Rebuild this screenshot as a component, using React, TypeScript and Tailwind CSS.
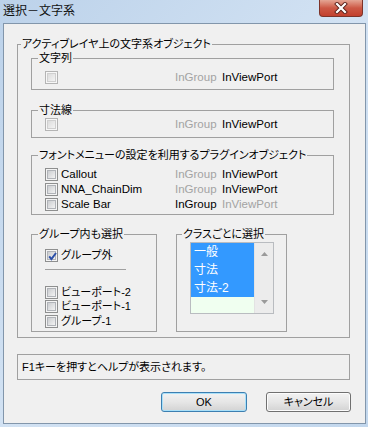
import React from 'react';

const Check: React.FC<{ checked?: boolean; dim?: boolean }> = ({ checked = false, dim = false }) => (
  <span
    className={`relative flex h-[13px] w-[13px] shrink-0 border p-[1px] ${
      dim ? 'border-[#b4b4b4] bg-[#f7f7f7]' : 'border-[#8e8f8f] bg-[#f4f4f4]'
    }`}
  >
    <span
      className={`h-full w-full border ${
        dim
          ? 'border-[#cfcfcf] bg-gradient-to-br from-[#dcdcdc] to-[#f4f4f4]'
          : 'border-[#b0b3b8] bg-gradient-to-br from-[#cbcdd0] to-[#f3f3f3]'
      }`}
    />
    {checked && (
      <svg className="absolute left-0 top-0" width="13" height="13" viewBox="0 0 13 13">
        <path d="M3.2 6.4 L5.4 9.2 L10 3" fill="none" stroke="#2b4fa8" strokeWidth="2" />
      </svg>
    )}
  </span>
);

const Group: React.FC<{ title: string; className?: string; children: React.ReactNode }> = ({
  title,
  className = '',
  children,
}) => (
  <fieldset className={`border border-[#a0a0a0] ${className}`}>
    <legend className="px-[1px] leading-[14px]">{title}</legend>
    {children}
  </fieldset>
);

const Row: React.FC<{ label?: string; group: boolean; view: boolean }> = ({ label, group, view }) => (
  <div className="flex h-[13px] items-center text-[11.5px] leading-[13px]">
    <div className="flex w-[130px] items-center gap-[3px]">
      <Check dim={!label} />
      {label && <span>{label}</span>}
    </div>
    <span className={`w-[47px] ${group ? 'text-black' : 'text-[#a3a3a3]'}`}>InGroup</span>
    <span className={view ? 'text-black' : 'text-[#a3a3a3]'}>InViewPort</span>
  </div>
);

const Item: React.FC<{ label: string; checked?: boolean; className?: string }> = ({ label, checked, className = '' }) => (
  <div className={`ml-[7px] flex h-[13px] items-center gap-[3px] leading-[13px] ${className}`}>
    <Check checked={checked} />
    <span>{label}</span>
  </div>
);

export default function App() {
  return (
    <div className="h-[427px] w-[368px] overflow-hidden bg-gradient-to-br from-[#bcd2ea] via-[#d2e2f3] to-[#c2d7ed] font-['Liberation_Sans','Noto_Sans_CJK_JP',sans-serif] text-[11px] text-black [font-feature-settings:'palt']">
      <div className="flex h-[23px] items-start justify-between">
        <span className="pl-[3px] pt-[4px] leading-[14px] text-[12px] text-[#111]">選択－文字系</span>
        <div className="mr-[5px] flex h-[17px] w-[44px] items-center justify-center rounded-b-[4px] border border-t-0 border-[#7d3329] bg-gradient-to-b from-[#e4a594] via-[#cc5845] to-[#c2402e]">
          <svg width="14" height="12" viewBox="0 0 14 12">
            <path d="M3 2 L11 10 M11 2 L3 10" stroke="#5a2019" strokeWidth="4" strokeLinecap="square" />
            <path d="M3 2 L11 10 M11 2 L3 10" stroke="#ffffff" strokeWidth="2.2" strokeLinecap="square" />
          </svg>
        </div>
      </div>

      <div className="ml-[3px] h-[401px] w-[363px] border border-[#8296ab] bg-[#f0f0f0]">
        <Group title="アクティブレイヤ上の文字系オブジェクト" className="ml-[13px] mt-[13px] w-[333px] pb-[5px] pl-[3px]">
          <Group title="文字列" className="ml-[10px] w-[303px] pb-[5px] pl-[6px] pt-[6px]">
            <div className="ml-[7px]">
              <Row group={false} view />
            </div>
          </Group>

          <Group title="寸法線" className="ml-[10px] mt-[13px] w-[303px] pb-[6px] pl-[6px] pt-[1px]">
            <div className="ml-[7px]">
              <Row group={false} view />
            </div>
          </Group>

          <Group
            title="フォントメニューの設定を利用するプラグインオブジェクト"
            className="ml-[10px] mt-[10px] w-[303px] pb-[3px] pl-[6px] pt-[6px]"
          >
            <div className="ml-[7px] flex flex-col gap-[2px]">
              <Row label="Callout" group={false} view />
              <Row label="NNA_ChainDim" group={false} view />
              <Row label="Scale Bar" group view={false} />
            </div>
          </Group>

          <div className="ml-[10px] mt-[12px] flex items-stretch">
            <Group title="グループ内も選択" className="w-[126px] pb-[3px] pl-[6px] pt-[8px]">
              <Item label="グループ外" checked />
              <div className="ml-[7px] mt-[7px] h-[1px] w-[81px] bg-[#a0a0a0]" />
              <Item label="ビューポート-2" className="mt-[16px]" />
              <Item label="ビューポート-1" className="mt-[1px]" />
              <Item label="グループ-1" className="mt-[2px]" />
            </Group>

            <Group title="クラスごとに選択" className="ml-[19px] w-[111px] pl-[5px] pt-[1px]">
              <div className="ml-[8px] flex h-[72px] w-[84px] border border-[#b9bcc0] bg-[#f0fff0]">
                <div className="flex flex-1 flex-col">
                  {['一般', '寸法', '寸法-2'].map((c) => (
                    <div key={c} className="h-[18px] bg-[#3399ff] pl-[3px] text-[12px] leading-[18px] text-white">
                      {c}
                    </div>
                  ))}
                </div>
                <div className="flex w-[19px] flex-col items-center justify-between border-l border-[#e3e3e3] bg-[#ececec] py-[9px]">
                  <svg width="7" height="4" viewBox="0 0 7 4">
                    <path d="M0 4 L3.5 0 L7 4 Z" fill="#9a9a9a" />
                  </svg>
                  <svg width="7" height="4" viewBox="0 0 7 4">
                    <path d="M0 0 L7 0 L3.5 4 Z" fill="#9a9a9a" />
                  </svg>
                </div>
              </div>
            </Group>
          </div>
        </Group>

        <div className="ml-[13px] mt-[16px] flex h-[26px] w-[333px] items-center border border-[#a0a0a0] pl-[4px] leading-[14px]">
          F1キーを押すとヘルプが表示されます。
        </div>

        <div className="mr-[14px] mt-[12px] flex justify-end gap-[19px]">
          <button className="flex h-[20px] w-[86px] items-center justify-center rounded-[3px] border border-[#3c7fb1] bg-gradient-to-b from-[#f2f2f2] via-[#e6e6e6] to-[#d3d3d3] leading-[14px] shadow-[inset_0_0_0_1px_#a9e0f9]">
            OK
          </button>
          <button className="flex h-[20px] w-[85px] items-center justify-center rounded-[3px] border border-[#707070] bg-gradient-to-b from-[#f2f2f2] via-[#e6e6e6] to-[#d3d3d3] leading-[14px] shadow-[inset_0_0_0_1px_#fcfcfc]">
            キャンセル
          </button>
        </div>
      </div>
    </div>
  );
}
